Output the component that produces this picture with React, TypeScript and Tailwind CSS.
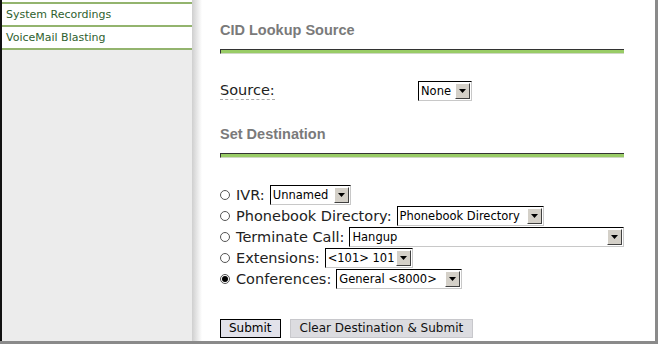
import React from "react";

const ui = { fontFamily: '"DejaVu Sans", Verdana, sans-serif' };
const heading = { fontFamily: '"Liberation Sans", Arial, sans-serif' };

function Select({ text, width }: { text: string; width: number }) {
  return (
    <div
      className="flex h-[20px] shrink-0 items-stretch border border-t-black border-l-black border-b-[#c8c8c8] border-r-[#c8c8c8] bg-white"
      style={{ minWidth: width }}
    >
      <span
        className="flex-1 whitespace-nowrap pl-[2px] pr-[1px] text-[11.5px] leading-[18px] text-black"
        style={ui}
      >
        {text}
      </span>
      <span className="m-px flex w-[15px] items-center justify-center border border-t-white border-l-white border-b-[#404040] border-r-[#404040] bg-[#d4d0c8]">
        <svg width="7" height="4" viewBox="0 0 7 4">
          <path d="M0 0h7L3.5 4z" fill="#000" />
        </svg>
      </span>
    </div>
  );
}

function Radio({ checked }: { checked?: boolean }) {
  return (
    <span className="mr-[6px] flex h-[10px] w-[10px] shrink-0 items-center justify-center rounded-full border border-[#555] bg-white">
      {checked && <span className="h-[6px] w-[6px] rounded-full bg-black" />}
    </span>
  );
}

function Bar() {
  return <div className="h-[5px] w-[404px] border-t border-l border-[#333] border-b border-b-[#cfd8c4] bg-[#99cc66]" />;
}

const destinations = [
  { label: "IVR:", value: "Unnamed", width: 81 },
  { label: "Phonebook Directory:", value: "Phonebook Directory", width: 147 },
  { label: "Terminate Call:", value: "Hangup", width: 275 },
  { label: "Extensions:", value: "<101> 101", width: 79 },
  { label: "Conferences:", value: "General <8000>", width: 126, checked: true },
];

export default function App() {
  return (
    <div className="h-[348px] w-[661px] overflow-hidden bg-white">
      <div className="flex h-[344px] w-[658px] border-r-[3px] border-b-[3px] border-[#8a8a8a]">
        <div className="flex h-full w-[192px] shrink-0 flex-col border-l-2 border-[#111] bg-[#ececec]">
          <div className="h-[2px] bg-white" />
          <div className="h-[2px] bg-[#93b46e]" />
          {["System Recordings", "VoiceMail Blasting"].map((item) => (
            <div
              key={item}
              className="flex h-[23px] items-center border-b-2 border-[#93b46e] bg-white px-[4px] pt-[2px] text-[11px] text-[#2f5f2f]"
              style={ui}
            >
              {item}
            </div>
          ))}
        </div>
        <div className="h-full w-[10px] shrink-0 bg-linear-to-r from-[#cfcfcf] to-white" />
        <div className="flex flex-1 flex-col pl-[18px]">
          <div className="h-[49px] pt-[22px]">
            <h2 className="text-[14.5px] font-bold leading-[17px] text-[#7a7a7a]" style={heading}>
              CID Lookup Source
            </h2>
          </div>
          <Bar />
          <div className="mt-[27px] flex h-[19px] items-start">
            <div className="flex w-[198px]">
              <span
                className="border-b border-dashed border-[#aaa] text-[14.5px] leading-[18px] text-[#222]"
                style={ui}
              >
                Source:
              </span>
            </div>
            <Select text="None" width={54} />
          </div>
          <div className="h-[53px] pt-[26px]">
            <h2 className="text-[14.5px] font-bold leading-[17px] text-[#7a7a7a]" style={heading}>
              Set Destination
            </h2>
          </div>
          <Bar />
          <div className="mt-[26px] flex flex-col">
            {destinations.map((d) => (
              <div key={d.label} className="flex h-[21px] items-center">
                <Radio checked={d.checked} />
                <span className="mr-[5px] text-[14.5px] leading-[18px] text-[#222]" style={ui}>
                  {d.label}
                </span>
                <Select text={d.value} width={d.width} />
              </div>
            ))}
          </div>
          <div className="mt-[30px] flex">
            <button
              className="h-[19px] border border-black bg-[#e2e2ea] px-[8px] text-[12px] leading-[17px] text-black"
              style={ui}
            >
              Submit
            </button>
            <button
              className="ml-[9px] h-[19px] border border-[#c8c8cc] bg-[#dcdce0] px-[9px] text-[12px] leading-[17px] text-[#111]"
              style={ui}
            >
              Clear Destination &amp; Submit
            </button>
          </div>
        </div>
      </div>
    </div>
  );
}
